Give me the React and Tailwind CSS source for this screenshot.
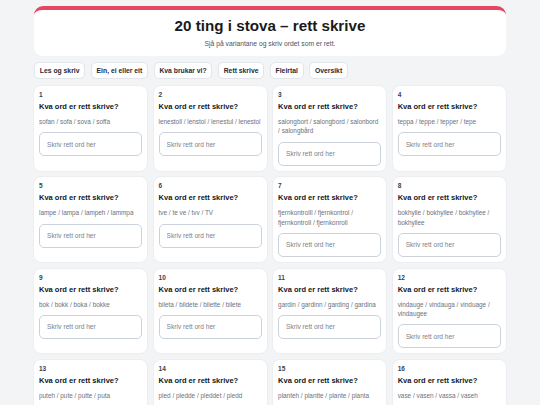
import React from 'react'

const items = [
  'sofan / sofa / sova / soffa',
  'lenestoll / lenstol / lenestul / lenestol',
  'salongbort / salongbord / salonbord / salongbård',
  'teppa / teppe / tepper / tepe',
  'lampe / lampa / lampeh / lammpa',
  'tve / te ve / tvv / TV',
  'fjernkontrolll / fjernkontrol / fjernkontroll / fjernkonroll',
  'bokhylle / bokhyllee / bokhyllee / bokhyllee',
  'bok / bokk / boka / bokke',
  'bileta / bildete / bilette / bilete',
  'gardin / gardinn / garding / gardina',
  'vindauge / vindauga / vinduage / vindaugee',
  'puteh / pute / putte / puta',
  'pled / pledde / pleddet / pledd',
  'planteh / plantte / plante / planta',
  'vase / vasen / vassa / vaseh',
  'klokka / klokke / kloke / klokkee',
  'spegel / speigel / spegl / speggel',
  'peis / peiss / pies / peisen',
  'hylle / hyllle / hyle / hyllen',
]

const tabs = ['Les og skriv', 'Ein, ei eller eit', 'Kva brukar vi?', 'Rett skrive', 'Fleirtal', 'Oversikt']

function Card({ n, variants }) {
  return (
    <div className='bg-white rounded-[7px] shadow-[0_0_0_1px_#eceef1] p-[5px] flex flex-col'>
      <div className='text-[6.5px] leading-[8px] font-bold text-[#374151]'>{n}</div>
      <div className='mt-[3px] text-[7.5px] leading-[10px] font-bold text-[#111827]'>Kva ord er rett skrive?</div>
      <div className='mt-[5px] text-[6.4px] leading-[9.3px] text-[#6b7280]'>{variants}</div>
      <input
        className='mt-[6px] h-[24px] w-full rounded-[5px] border-[1.5px] border-[#cbd2dc] bg-white px-[7px] text-[6.6px] text-[#111827] placeholder:text-[#7b818b] outline-none'
        placeholder='Skriv rett ord her'
      />
    </div>
  )
}

export default function App() {
  return (
    <div className='min-h-screen bg-[#f3f4f6] pt-[5.5px] pb-6' style={{ fontFamily: '"Liberation Sans", Arial, sans-serif' }}>
      <div className='w-[472px] mx-auto'>
        <div className='bg-white rounded-[9px] border-t-[4px] border-[#e4475f] pt-[7.5px] pb-[7.5px] text-center'>
          <h1 className='text-[15.2px] leading-[18px] font-bold text-[#1a1a1a]'>20 ting i stova – rett skrive</h1>
          <p className='mt-[4px] text-[6.75px] leading-[9px] text-[#4b5563]'>Sjå på variantane og skriv ordet som er rett.</p>
        </div>

        <div className='mt-[6.8px] flex gap-[5.5px]'>
          {tabs.map((t) => (
            <button key={t} className='h-[17px] px-[4.8px] rounded-[5px] bg-white border border-[#e2e5ea] text-[6.8px] font-bold text-[#1f2937]'>
              {t}
            </button>
          ))}
        </div>

        <div className='mt-[6.7px] grid grid-cols-4 gap-x-[6.2px] gap-y-[6.7px]'>
          {items.map((v, i) => <Card key={i} n={i + 1} variants={v} />)}
        </div>
      </div>
    </div>
  )
}
